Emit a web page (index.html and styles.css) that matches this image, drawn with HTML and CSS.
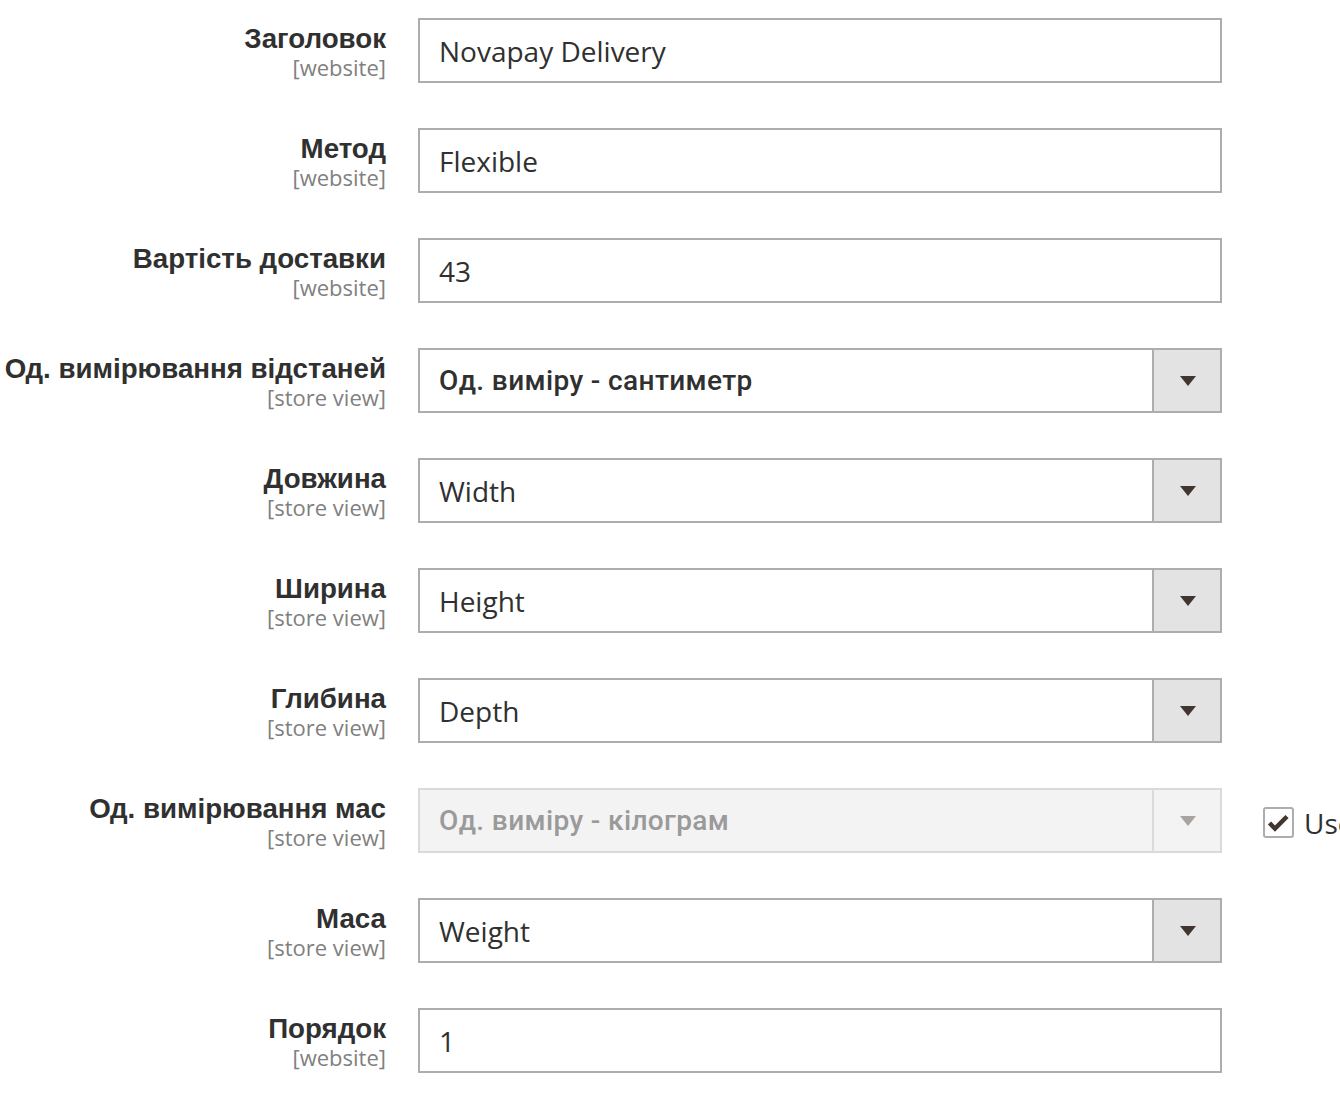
FILE: index.html
```html
<!DOCTYPE html>
<html lang="uk">
<head>
<meta charset="utf-8">
<title>Novapay Delivery</title>
<link rel="stylesheet" href="styles.css">
</head>
<body>
<div class="form">
  <div class="row">
    <div class="label"><span class="name">Заголовок</span><span class="scope">[website]</span></div>
    <div class="control"><div class="input">Novapay Delivery</div></div>
  </div>
  <div class="row">
    <div class="label"><span class="name">Метод</span><span class="scope">[website]</span></div>
    <div class="control"><div class="input">Flexible</div></div>
  </div>
  <div class="row">
    <div class="label"><span class="name">Вартість доставки</span><span class="scope">[website]</span></div>
    <div class="control"><div class="input">43</div></div>
  </div>
  <div class="row">
    <div class="label"><span class="name">Од. вимірювання відстаней</span><span class="scope">[store view]</span></div>
    <div class="control"><div class="select"><span class="value cyr">Од. виміру - сантиметр</span><span class="btn"><span class="arrow"></span></span></div></div>
  </div>
  <div class="row">
    <div class="label"><span class="name">Довжина</span><span class="scope">[store view]</span></div>
    <div class="control"><div class="select"><span class="value">Width</span><span class="btn"><span class="arrow"></span></span></div></div>
  </div>
  <div class="row">
    <div class="label"><span class="name">Ширина</span><span class="scope">[store view]</span></div>
    <div class="control"><div class="select"><span class="value">Height</span><span class="btn"><span class="arrow"></span></span></div></div>
  </div>
  <div class="row">
    <div class="label"><span class="name">Глибина</span><span class="scope">[store view]</span></div>
    <div class="control"><div class="select"><span class="value">Depth</span><span class="btn"><span class="arrow"></span></span></div></div>
  </div>
  <div class="row">
    <div class="label"><span class="name">Од. вимірювання мас</span><span class="scope">[store view]</span></div>
    <div class="control"><div class="select disabled"><span class="value cyr">Од. виміру - кілограм</span><span class="btn"><span class="arrow"></span></span></div></div>
    <div class="use">
      <span class="checkbox"><svg viewBox="0 0 30 30" width="30" height="30"><path d="M5.5 15 L11 20.5 L23 8.5" fill="none" stroke="#41362f" stroke-width="4.5" stroke-linecap="butt" stroke-linejoin="miter"/></svg></span>
      <span class="use-text">Use</span>
    </div>
  </div>
  <div class="row">
    <div class="label"><span class="name">Маса</span><span class="scope">[store view]</span></div>
    <div class="control"><div class="select"><span class="value">Weight</span><span class="btn"><span class="arrow"></span></span></div></div>
  </div>
  <div class="row">
    <div class="label"><span class="name">Порядок</span><span class="scope">[website]</span></div>
    <div class="control"><div class="input">1</div></div>
  </div>
</div>
</body>
</html>
```
FILE: styles.css
```css
html, body {
  margin: 0;
  padding: 0;
  background: #fff;
  overflow: hidden;
}
body {
  padding-top: 18px;
  font-family: "Open Sans", "Liberation Sans", sans-serif;
  color: #303030;
}
.form {
  display: flex;
  flex-direction: column;
  gap: 45px;
}
.row {
  display: flex;
  align-items: flex-start;
  white-space: nowrap;
}
.label {
  width: 386px;
  flex: none;
  display: flex;
  flex-direction: column;
  align-items: flex-end;
  padding-top: 6px;
}
.name {
  font-family: "Liberation Sans", Arial, sans-serif;
  font-weight: 700;
  font-size: 27.7px;
  line-height: 30px;
  color: #303030;
}
.scope {
  font-family: "Open Sans", sans-serif;
  font-size: 22px;
  line-height: 26px;
  color: #808080;
  margin-top: 0;
}
.control {
  margin-left: 32px;
  width: 804px;
  flex: none;
}
.input, .select {
  box-sizing: border-box;
  height: 65px;
  border: 2px solid #adadad;
  background: #fff;
  display: flex;
  align-items: center;
  font-size: 28px;
  color: #303030;
}
.input {
  padding-left: 19px;
}
.value {
  flex: 1;
  padding-left: 19px;
}
.cyr {
  font-family: "Roboto", "Liberation Sans", sans-serif;
  font-weight: 500;
  font-size: 28px;
  letter-spacing: 0.38px;
}
.btn {
  box-sizing: border-box;
  width: 68px;
  align-self: stretch;
  background: #e3e3e3;
  border-left: 2px solid #adadad;
  display: flex;
  align-items: center;
  justify-content: center;
}
.arrow {
  width: 0;
  height: 0;
  border-left: 8px solid transparent;
  border-right: 8px solid transparent;
  border-top: 10px solid #41362f;
  margin-left: 2px;
}
.select.disabled {
  background: #f3f3f3;
  border-color: #dadada;
  color: #9a9a9a;
}
.select.disabled .btn {
  background: #f3f3f3;
  border-left-color: #dadada;
}
.select.disabled .arrow {
  border-top-color: #a8a4a1;
}
.use {
  margin-left: 41px;
  height: 65px;
  display: flex;
  align-items: center;
  gap: 10px;
}
.checkbox {
  box-sizing: border-box;
  width: 31px;
  height: 31px;
  border: 2px solid #adadad;
  border-radius: 3px;
  display: flex;
  align-items: center;
  justify-content: center;
  margin-top: 4px;
}
.checkbox svg {
  display: block;
  flex: none;
}
.use-text {
  font-size: 28px;
  color: #303030;
  margin-top: 4px;
}
```
